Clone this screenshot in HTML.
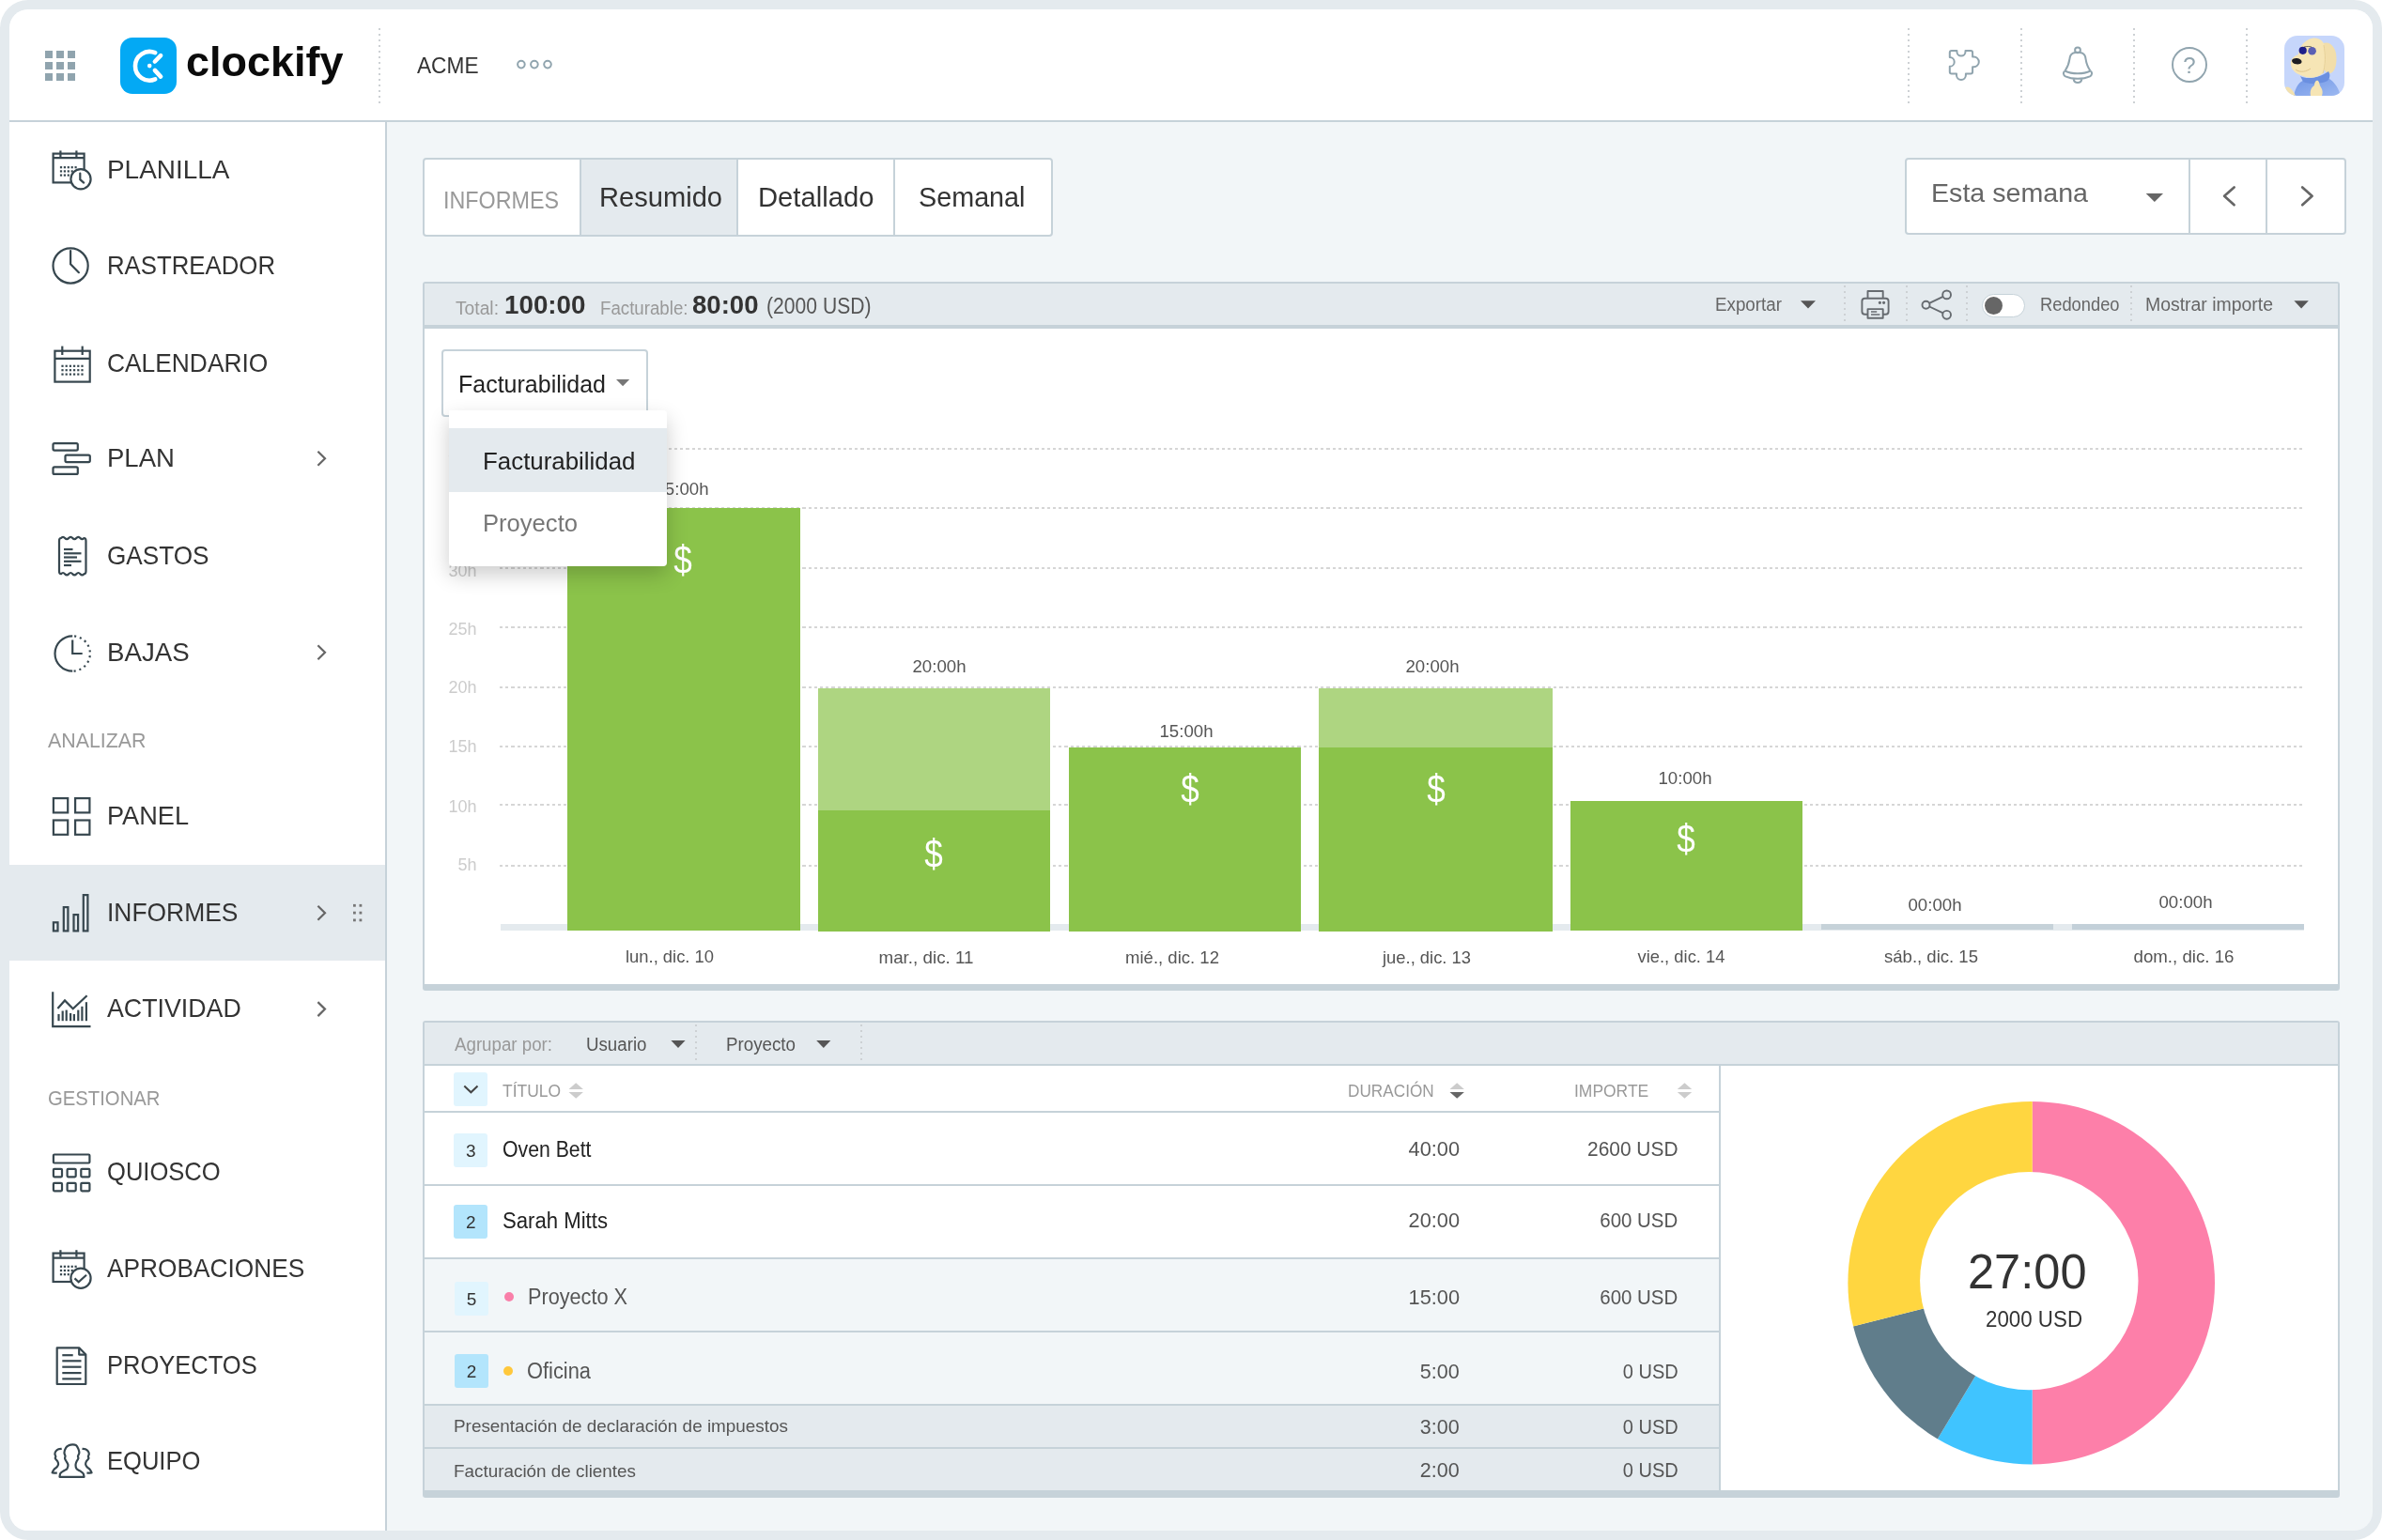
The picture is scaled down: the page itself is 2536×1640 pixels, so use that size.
<!DOCTYPE html>
<html lang="es">
<head>
<meta charset="utf-8">
<title>Clockify – Informes</title>
<style>
*{box-sizing:border-box;margin:0;padding:0}
html,body{width:2536px;height:1640px;background:#fff;overflow:hidden}
body{font-family:"Liberation Sans",Arial,sans-serif;position:relative}
.a{position:absolute}
.t{position:absolute;white-space:nowrap;line-height:1;z-index:2}
.tl{position:absolute;left:0;top:0;width:2536px;height:1640px;will-change:transform}
#frame{left:0;top:0;width:2536px;height:1640px;border-radius:30px;background:#e4eaee}
#app{left:10px;top:10px;width:2516px;height:1620px;border-radius:20px;background:#f2f6f8;overflow:hidden}
#header{left:0;top:0;width:2516px;height:120px;background:#fff;border-bottom:2px solid #c6d2d9}
#sidebar{left:0;top:120px;width:402px;height:1500px;background:#fff;border-right:2px solid #c6d2d9}
#active{left:0;top:911px;width:400px;height:102px;background:#e4eaee}
.vd{width:2px;background:repeating-linear-gradient(to bottom,#cdd1d4 0 2px,transparent 2px 6px)}
.hd{height:2px;background:repeating-linear-gradient(to right,#d6d6d6 0 3.2px,transparent 3.2px 6.2px)}
.box{background:#fff;border:2px solid #c6d2d9}
.bar{background:#8bc34a}
.barl{background:#aed581}
svg{position:absolute;left:0;top:0;overflow:visible}
</style>
</head>
<body>
<div id="frame" class="a"></div>
<div id="app" class="a">
  <div id="header" class="a"></div>
  <div id="sidebar" class="a"></div>
  <div id="active" class="a"></div>
</div>

<!-- header dividers -->
<div class="a vd" style="left:403px;top:30px;height:80px"></div>
<div class="a vd" style="left:2031px;top:30px;height:80px"></div>
<div class="a vd" style="left:2151px;top:30px;height:80px"></div>
<div class="a vd" style="left:2271px;top:30px;height:80px"></div>
<div class="a vd" style="left:2391px;top:30px;height:80px"></div>

<!-- tabs -->
<div class="a box" style="left:450px;top:168px;width:671px;height:84px;border-radius:4px"></div>
<div class="a" style="left:619px;top:170px;width:166px;height:80px;background:#e4eaee"></div>
<div class="a" style="left:617px;top:170px;width:2px;height:80px;background:#c6d2d9"></div>
<div class="a" style="left:784px;top:170px;width:2px;height:80px;background:#c6d2d9"></div>
<div class="a" style="left:951px;top:170px;width:2px;height:80px;background:#c6d2d9"></div>

<!-- date picker -->
<div class="a box" style="left:2028px;top:168px;width:470px;height:82px;border-radius:4px"></div>
<div class="a" style="left:2330px;top:170px;width:2px;height:80px;background:#c6d2d9"></div>
<div class="a" style="left:2412px;top:170px;width:2px;height:80px;background:#c6d2d9"></div>

<!-- chart panel -->
<div class="a" style="left:450px;top:300px;width:2041px;height:755px;background:#c6d2d9;border-radius:3px"></div>
<div class="a" style="left:452px;top:301.700px;width:2037px;height:44.400px;background:#e4eaee"></div>
<div class="a" style="left:452px;top:349.600px;width:2037px;height:698.400px;background:#fff"></div>
<div class="a vd" style="left:1963px;top:304px;height:42px"></div>
<div class="a vd" style="left:2029px;top:304px;height:42px"></div>
<div class="a vd" style="left:2093px;top:304px;height:42px"></div>
<div class="a vd" style="left:2268px;top:304px;height:42px"></div>
<!-- toggle -->
<div class="a" style="left:2110px;top:313px;width:46px;height:25px;border-radius:13px;background:#fff;border:1.5px solid #c6d2d9"></div>
<div class="a" style="left:2113px;top:316px;width:19px;height:19px;border-radius:50%;background:#666"></div>

<!-- chart dropdown -->
<div class="a box" style="left:470px;top:372px;width:220px;height:72px;border-radius:4px"></div>

<!-- grid lines -->
<div class="a hd" style="left:532px;top:477px;width:1921px"></div>
<div class="a hd" style="left:532px;top:540.4px;width:1921px"></div>
<div class="a hd" style="left:532px;top:604.1px;width:1921px"></div>
<div class="a hd" style="left:532px;top:667.1px;width:1921px"></div>
<div class="a hd" style="left:532px;top:730.5px;width:1921px"></div>
<div class="a hd" style="left:532px;top:794.1px;width:1921px"></div>
<div class="a hd" style="left:532px;top:856px;width:1921px"></div>
<div class="a hd" style="left:532px;top:921.3px;width:1921px"></div>
<!-- baseline -->
<div class="a" style="left:533px;top:984px;width:1920px;height:7px;background:#e4eaee"></div>
<div class="a" style="left:1939px;top:984px;width:247px;height:6px;background:#c6d2d9"></div>
<div class="a" style="left:2206px;top:984px;width:247px;height:6px;background:#c3d0d9"></div>
<!-- bars -->
<div class="a bar" style="left:604px;top:541px;width:248px;height:450px"></div>
<div class="a barl" style="left:871px;top:733px;width:247px;height:131px"></div>
<div class="a bar" style="left:871px;top:863px;width:247px;height:129px"></div>
<div class="a bar" style="left:1138px;top:796px;width:247px;height:196px"></div>
<div class="a barl" style="left:1404px;top:733px;width:249px;height:64px"></div>
<div class="a bar" style="left:1404px;top:796px;width:249px;height:196px"></div>
<div class="a bar" style="left:1672px;top:853px;width:247px;height:138px"></div>

<!-- dropdown menu -->
<div class="a" style="left:478px;top:437px;width:232px;height:166px;background:#fff;border-radius:0 4px 4px 4px;box-shadow:0 9px 22px rgba(0,0,0,.2);z-index:5"></div>
<div class="a" style="left:478px;top:456px;width:232px;height:68px;background:#e4eaee;z-index:5"></div>

<!-- table panel -->
<div class="a" style="left:450px;top:1087px;width:2041px;height:508px;background:#c6d2d9;border-radius:3px"></div>
<div class="a" style="left:452px;top:1089px;width:2037px;height:44px;background:#e4eaee"></div>
<div class="a vd" style="left:740px;top:1091px;height:41px"></div>
<div class="a vd" style="left:916px;top:1091px;height:41px"></div>
<!-- table rows -->
<div class="a" style="left:452px;top:1134.75px;width:1378.3px;height:48.5px;background:#fff"></div>
<div class="a" style="left:452px;top:1184.75px;width:1378.3px;height:76.5px;background:#fff"></div>
<div class="a" style="left:452px;top:1262.75px;width:1378.3px;height:76.5px;background:#fff"></div>
<div class="a" style="left:452px;top:1340.75px;width:1378.3px;height:76.5px;background:#f2f6f8"></div>
<div class="a" style="left:452px;top:1418.75px;width:1378.3px;height:76.5px;background:#f2f6f8"></div>
<div class="a" style="left:452px;top:1496.75px;width:1378.3px;height:44.5px;background:#e4eaee"></div>
<div class="a" style="left:452px;top:1542.75px;width:1378.3px;height:44.5px;background:#e4eaee"></div>
<!-- donut panel -->
<div class="a" style="left:1831.8px;top:1134.75px;width:657.2px;height:452.25px;background:#fff"></div>
<!-- badges -->
<div class="a" style="left:483px;top:1142px;width:36px;height:36px;border-radius:3px;background:#e1f5fe"></div>
<div class="a" style="left:483px;top:1207px;width:36px;height:36px;border-radius:3px;background:#e1f5fe"></div>
<div class="a" style="left:483px;top:1283px;width:36px;height:36px;border-radius:3px;background:#b3e5fc"></div>
<div class="a" style="left:484px;top:1365px;width:36px;height:36px;border-radius:3px;background:#e1f5fe"></div>
<div class="a" style="left:484px;top:1442px;width:36px;height:36px;border-radius:3px;background:#b3e5fc"></div>
<div class="a" style="left:537px;top:1376px;width:10px;height:10px;border-radius:50%;background:#f97fa9"></div>
<div class="a" style="left:536px;top:1455px;width:10px;height:10px;border-radius:50%;background:#ffc83c"></div>

<svg width="2536" height="1640" viewBox="0 0 2536 1640" style="z-index:3">
<rect x="48" y="54" width="8" height="8" fill="#90a4ae"/>
<rect x="60" y="54" width="8" height="8" fill="#90a4ae"/>
<rect x="72" y="54" width="8" height="8" fill="#90a4ae"/>
<rect x="48" y="66" width="8" height="8" fill="#90a4ae"/>
<rect x="60" y="66" width="8" height="8" fill="#90a4ae"/>
<rect x="72" y="66" width="8" height="8" fill="#90a4ae"/>
<rect x="48" y="78" width="8" height="8" fill="#90a4ae"/>
<rect x="60" y="78" width="8" height="8" fill="#90a4ae"/>
<rect x="72" y="78" width="8" height="8" fill="#90a4ae"/>
<rect x="128" y="40" width="60" height="60" rx="13" fill="#03a9f4"/>
<g fill="none" stroke="#fff" stroke-width="4.6" stroke-linecap="round"><path d="M165.2 56.2A15.3 15.3 0 1 0 165.2 84.4"/><path d="M164.9 65.5L171.1 59.2M164.9 74.9L171.1 81.6"/></g><circle cx="159.2" cy="70.1" r="2.3" fill="#fff"/>
<circle cx="554.9" cy="68.6" r="3.8" fill="none" stroke="#90a4ae" stroke-width="2"/>
<circle cx="568.9" cy="68.6" r="3.8" fill="none" stroke="#90a4ae" stroke-width="2"/>
<circle cx="583.0" cy="68.6" r="3.8" fill="none" stroke="#90a4ae" stroke-width="2"/>
<path fill="none" stroke="#90a4ae" stroke-width="2" stroke-linejoin="round" d="M2077.8 53.9 H2083.4 V55 A4.55 4.55 0 0 0 2092.5 55 V53.9 H2098.1 Q2100.1 53.9 2100.1 55.9 V60.6 H2101.5 A5.3 5.3 0 0 1 2101.5 71.2 H2100.1 V76.5 Q2100.1 78.5 2098.1 78.5 H2092.9 V80 A4.95 4.95 0 0 1 2083 80 V78.5 H2077.8 Q2075.8 78.5 2075.8 76.5 V70.8 A4.9 4.9 0 0 0 2075.8 61 V55.9 Q2075.8 53.9 2077.8 53.9Z"/>
<g fill="none" stroke="#90a4ae" stroke-width="2" stroke-linejoin="round"><circle cx="2212" cy="53.3" r="2.9"/><path d="M2198.5 75.5 C2204 68 2203 62 2204.2 59.5 C2205.5 56.6 2208.5 55.8 2212 55.8 C2215.500 55.8 2218.5 56.6 2219.8 59.5 C2221 62 2220 68 2225.5 75.5"/><path d="M2198.5 75.5 C2196 77 2196.5 80 2199 81.300 C2206 84.600 2218 84.600 2225 81.300 C2227.500 80 2228 77 2225.5 75.5"/><path d="M2198.5 75.5 C2206 79.300 2218 79.300 2225.5 75.5"/><path d="M2207.6 84.2 A4.5 4.8 0 0 0 2216.4 84.2"/></g>
<circle cx="2331" cy="69" r="18" fill="none" stroke="#90a4ae" stroke-width="1.9"/>
<defs><clipPath id="av"><rect x="0" y="0" width="64" height="64" rx="14"/></clipPath><linearGradient id="hood" x1="0" y1="0" x2="1" y2="1"><stop offset="0" stop-color="#6f95e6"/><stop offset="1" stop-color="#9db9f1"/></linearGradient></defs>
<g clip-path="url(#av)" transform="translate(2432 38)"><rect x="0" y="0" width="64" height="64" fill="#c6d6fb"/><path d="M41 8 C50 5 56 14 55.500 26 C55 35 52 41 47 40 C42 39 40 30 40 22 Z" fill="#f2deaa"/><path d="M10 64 C12 54 16 49 22 47 L44 44 C52 47 57 54 60 64 Z" fill="url(#hood)"/><path d="M0 56 C4 52 8 56 12 64 L0 64 Z" fill="#f3e1ae"/><path d="M17 43 C24 47 38 45 47 38 C49 41 49 45 46 48 C38 52 26 52 20 49 Z" fill="#6a8fe0"/><path d="M26 4 C34 0 42 4 43 12 C45 22 45 34 41 40 C36 45 26 46 20 43 C14 41 8 38 7 31 C6 25 10 22 15 20 C16 12 20 7 26 4 Z" fill="#f6e5b5"/><path d="M42 10 C44 20 44 32 41 40" stroke="#e5cf96" stroke-width="1" fill="none"/><path d="M12 36 C17 40 24 38 28 35" stroke="#e0c58c" stroke-width="1" fill="none"/><ellipse cx="13.300" cy="27.200" rx="5.300" ry="3.200" transform="rotate(8 13.300 27.200)" fill="#1c1c22"/><circle cx="19.700" cy="15.800" r="4.100" fill="#1f1f8a"/><circle cx="29.600" cy="16.200" r="4.300" fill="#5a5fb4"/><path d="M21 12 C24 11.300 27 11.300 29 12" stroke="#333" stroke-width="0.700" fill="none"/><path d="M28 64 C27 58 29 55 32 53 C32 49 34 47 36 48 C38 50 37 53 39 55 C41 58 41 61 40 64 Z" fill="#f6e5b5"/></g>
<path d="M2284.700 205.900H2303L2293.850 215.100Z" fill="#666"/>
<path d="M2378.600 199.400L2368.100 208.800L2378.600 218.200M2451.200 199.400L2461.600 208.800L2451.200 218.200" fill="none" stroke="#666" stroke-width="2.700" stroke-linecap="round" stroke-linejoin="round"/>
<g fill="none" stroke="#37474f" stroke-width="2.200">
<rect x="56.6" y="163.6" width="32.99999999999999" height="30.80000000000001"/>
<path d="M56.6 168.2H89.6"/>
<path d="M64.4 160.4V167.4"/>
<path d="M81.4 160.4V167.4"/>
<rect x="63.90" y="177.10" width="2.2" height="2.2" fill="#37474f" stroke="none"/>
<rect x="63.90" y="181.30" width="2.2" height="2.2" fill="#37474f" stroke="none"/>
<rect x="63.90" y="185.50" width="2.2" height="2.2" fill="#37474f" stroke="none"/>
<rect x="67.80" y="177.10" width="2.2" height="2.2" fill="#37474f" stroke="none"/>
<rect x="67.80" y="181.30" width="2.2" height="2.2" fill="#37474f" stroke="none"/>
<rect x="67.80" y="185.50" width="2.2" height="2.2" fill="#37474f" stroke="none"/>
<rect x="71.70" y="177.10" width="2.2" height="2.2" fill="#37474f" stroke="none"/>
<rect x="71.70" y="181.30" width="2.2" height="2.2" fill="#37474f" stroke="none"/>
<rect x="71.70" y="185.50" width="2.2" height="2.2" fill="#37474f" stroke="none"/>
<rect x="75.60" y="177.10" width="2.2" height="2.2" fill="#37474f" stroke="none"/>
<rect x="75.60" y="181.30" width="2.2" height="2.2" fill="#37474f" stroke="none"/>
<rect x="75.60" y="185.50" width="2.2" height="2.2" fill="#37474f" stroke="none"/>
<rect x="79.50" y="177.10" width="2.2" height="2.2" fill="#37474f" stroke="none"/>
<rect x="79.50" y="181.30" width="2.2" height="2.2" fill="#37474f" stroke="none"/>
<rect x="79.50" y="185.50" width="2.2" height="2.2" fill="#37474f" stroke="none"/>
<circle cx="86" cy="190.700" r="10.600" fill="#fff"/>
<path d="M85.300 184.500V191.200L89.200 194.600" stroke-linecap="round"/>
<circle cx="75.100" cy="283" r="18.600"/>
<path d="M75.100 267V281.200L83.900 290.200" stroke-linecap="round"/>
<rect x="58.4" y="373.7" width="37.300000000000004" height="32.900000000000034"/>
<path d="M58.4 381.8H95.7"/>
<path d="M66.3 368.6V378"/>
<path d="M87.7 368.6V378"/>
<rect x="65.40" y="388.70" width="2.2" height="2.2" fill="#37474f" stroke="none"/>
<rect x="65.40" y="393.10" width="2.2" height="2.2" fill="#37474f" stroke="none"/>
<rect x="65.40" y="397.50" width="2.2" height="2.2" fill="#37474f" stroke="none"/>
<rect x="69.60" y="388.70" width="2.2" height="2.2" fill="#37474f" stroke="none"/>
<rect x="69.60" y="393.10" width="2.2" height="2.2" fill="#37474f" stroke="none"/>
<rect x="69.60" y="397.50" width="2.2" height="2.2" fill="#37474f" stroke="none"/>
<rect x="73.80" y="388.70" width="2.2" height="2.2" fill="#37474f" stroke="none"/>
<rect x="73.80" y="393.10" width="2.2" height="2.2" fill="#37474f" stroke="none"/>
<rect x="73.80" y="397.50" width="2.2" height="2.2" fill="#37474f" stroke="none"/>
<rect x="78.00" y="388.70" width="2.2" height="2.2" fill="#37474f" stroke="none"/>
<rect x="78.00" y="393.10" width="2.2" height="2.2" fill="#37474f" stroke="none"/>
<rect x="78.00" y="397.50" width="2.2" height="2.2" fill="#37474f" stroke="none"/>
<rect x="82.20" y="388.70" width="2.2" height="2.2" fill="#37474f" stroke="none"/>
<rect x="82.20" y="393.10" width="2.2" height="2.2" fill="#37474f" stroke="none"/>
<rect x="82.20" y="397.50" width="2.2" height="2.2" fill="#37474f" stroke="none"/>
<rect x="86.40" y="388.70" width="2.2" height="2.2" fill="#37474f" stroke="none"/>
<rect x="86.40" y="393.10" width="2.2" height="2.2" fill="#37474f" stroke="none"/>
<rect x="86.40" y="397.50" width="2.2" height="2.2" fill="#37474f" stroke="none"/>
<rect x="56.500" y="472.100" width="26.300" height="7.500" rx="1.500"/>
<rect x="69.500" y="484.600" width="26.300" height="7.500" rx="1.500"/>
<rect x="56.500" y="497.400" width="26.300" height="7.500" rx="1.500"/>
<path d="M63 576 Q63 573 65 573 Q67.04 570.60 69.08 573.00Q71.12 575.40 73.17 573.00Q75.21 570.60 77.25 573.00Q79.29 575.40 81.33 573.00Q83.37 570.60 85.42 573.00Q87.46 575.40 89.50 573.00 Q91.500 573 91.500 576 V608.200 Q91.500 611.2 89.500 611.2 Q87.46 613.60 85.42 611.20Q83.38 608.80 81.33 611.20Q79.29 613.60 77.25 611.20Q75.21 608.80 73.17 611.20Q71.13 613.60 69.08 611.20Q67.04 608.80 65.00 611.20 Q63 611.2 63 608.200 Z" stroke-linejoin="round"/>
<path d="M68 585H77.5"/>
<path d="M68 589.3H86.5"/>
<path d="M68 593.5H82"/>
<path d="M68 597.8H86.5"/>
<path d="M68 602H76"/>
<path d="M77.200 677.300A18.700 18.700 0 0 0 77.200 714.700"/>
<path d="M77.200 677.300A18.700 18.700 0 0 1 77.200 714.700" stroke-dasharray="2.100 3.770" stroke-dashoffset="-2"/>
<path d="M77.200 681.500V696H87.700"/>
<rect x="56.9" y="850.1" width="15.300" height="15.300"/>
<rect x="56.9" y="873.5" width="15.300" height="15.300"/>
<rect x="80.1" y="850.1" width="15.300" height="15.300"/>
<rect x="80.1" y="873.5" width="15.300" height="15.300"/>
<rect x="56.9" y="982.3" width="4.600" height="9.1"/>
<rect x="67.8" y="966.1" width="4.600" height="25.3"/>
<rect x="78.5" y="974.1" width="4.600" height="17.3"/>
<rect x="88.8" y="953.1" width="4.600" height="38.3"/>
<path d="M56.200 1056.300V1093.200H96.500"/>
<path d="M61.400 1073.900L69 1065.400L77.700 1074.200L92.600 1060.200"/>
<path d="M62.5 1080V1087.200"/>
<path d="M66.7 1076.5V1087.200"/>
<path d="M70.7 1075.6V1087.200"/>
<path d="M75.1 1079V1087.200"/>
<path d="M78.9 1080V1087.200"/>
<path d="M83.3 1075.6V1087.200"/>
<path d="M87.4 1071.8V1087.200"/>
<path d="M91.9 1067.2V1087.200"/>
<rect x="56.900" y="1229.500" width="38.500" height="9" rx="1"/>
<rect x="56.9" y="1244.8" width="9.100" height="8.500" rx="1"/>
<rect x="56.9" y="1259.8" width="9.100" height="8.500" rx="1"/>
<rect x="71.6" y="1244.8" width="9.100" height="8.500" rx="1"/>
<rect x="71.6" y="1259.8" width="9.100" height="8.500" rx="1"/>
<rect x="86.3" y="1244.8" width="9.100" height="8.500" rx="1"/>
<rect x="86.3" y="1259.8" width="9.100" height="8.500" rx="1"/>
<rect x="56.6" y="1334.6" width="32.99999999999999" height="30.40000000000009"/>
<path d="M56.6 1339.6H89.6"/>
<path d="M64.4 1331.2V1338.6"/>
<path d="M81.4 1331.2V1338.6"/>
<rect x="63.90" y="1347.70" width="2.2" height="2.2" fill="#37474f" stroke="none"/>
<rect x="63.90" y="1351.90" width="2.2" height="2.2" fill="#37474f" stroke="none"/>
<rect x="63.90" y="1356.10" width="2.2" height="2.2" fill="#37474f" stroke="none"/>
<rect x="67.80" y="1347.70" width="2.2" height="2.2" fill="#37474f" stroke="none"/>
<rect x="67.80" y="1351.90" width="2.2" height="2.2" fill="#37474f" stroke="none"/>
<rect x="67.80" y="1356.10" width="2.2" height="2.2" fill="#37474f" stroke="none"/>
<rect x="71.70" y="1347.70" width="2.2" height="2.2" fill="#37474f" stroke="none"/>
<rect x="71.70" y="1351.90" width="2.2" height="2.2" fill="#37474f" stroke="none"/>
<rect x="71.70" y="1356.10" width="2.2" height="2.2" fill="#37474f" stroke="none"/>
<rect x="75.60" y="1347.70" width="2.2" height="2.2" fill="#37474f" stroke="none"/>
<rect x="75.60" y="1351.90" width="2.2" height="2.2" fill="#37474f" stroke="none"/>
<rect x="75.60" y="1356.10" width="2.2" height="2.2" fill="#37474f" stroke="none"/>
<rect x="79.50" y="1347.70" width="2.2" height="2.2" fill="#37474f" stroke="none"/>
<rect x="79.50" y="1351.90" width="2.2" height="2.2" fill="#37474f" stroke="none"/>
<rect x="79.50" y="1356.10" width="2.2" height="2.2" fill="#37474f" stroke="none"/>
<circle cx="86" cy="1361.200" r="10.600" fill="#fff"/>
<path d="M79.500 1361.400L83.700 1365.200L92 1357.800"/>
<path d="M60.700 1435.300H84.200L91.300 1442.600V1474H60.700Z" stroke-linejoin="round"/>
<path d="M84.200 1435.300V1442.600H91.300" stroke-linejoin="round"/>
<path d="M66.300 1443.2H77.7"/>
<path d="M66.300 1449.3H86.5"/>
<path d="M66.300 1455.7H86.5"/>
<path d="M66.300 1462.1H86.5"/>
<path d="M66.300 1468.4H86.5"/>
<path d="M63.47 1572.86C63.62 1572.18 63.64 1569.91 64.40 1568.81C65.16 1567.70 66.87 1566.99 68.04 1566.21C69.21 1565.43 70.68 1565.17 71.41 1564.13C72.15 1563.09 72.58 1561.28 72.45 1559.98C72.32 1558.68 71.20 1557.47 70.63 1556.34C70.07 1555.22 69.27 1554.18 69.08 1553.23C68.89 1552.28 69.60 1551.67 69.49 1550.63C69.39 1549.60 68.35 1548.47 68.45 1547.00C68.56 1545.53 69.32 1543.10 70.11 1541.81C70.91 1540.51 72.02 1539.80 73.23 1539.21C74.44 1538.62 76.09 1538.29 77.38 1538.28C78.68 1538.26 80.02 1538.35 81.02 1539.11C82.01 1539.87 82.79 1541.53 83.35 1542.85C83.92 1544.16 84.45 1545.70 84.39 1547.00C84.33 1548.30 83.16 1549.60 82.99 1550.63C82.82 1551.67 83.60 1552.28 83.35 1553.23C83.11 1554.18 82.01 1555.22 81.54 1556.34C81.06 1557.47 80.50 1558.68 80.50 1559.98C80.50 1561.28 80.76 1563.05 81.54 1564.13C82.32 1565.21 84.00 1565.65 85.17 1566.47C86.34 1567.29 87.81 1568.00 88.55 1569.07C89.28 1570.13 89.41 1572.22 89.58 1572.86Z" stroke-linejoin="round"/>
<path d="M65.70 1542.85C65.14 1542.91 63.36 1542.83 62.33 1543.26C61.29 1543.69 60.12 1544.60 59.47 1545.44C58.82 1546.28 58.46 1547.35 58.43 1548.30C58.41 1549.25 59.25 1550.33 59.31 1551.15C59.38 1551.97 58.47 1552.36 58.80 1553.23C59.12 1554.09 60.74 1555.31 61.29 1556.34C61.83 1557.38 62.15 1558.51 62.07 1559.46C61.98 1560.41 61.50 1561.19 60.77 1562.06C60.03 1562.92 58.45 1563.74 57.65 1564.65C56.86 1565.56 56.25 1566.86 55.99 1567.51C55.73 1568.16 55.30 1568.37 56.10 1568.55C56.89 1568.72 59.99 1568.55 60.77 1568.55" stroke-linecap="butt"/>
<path d="M87.51 1542.85C88.07 1542.91 89.84 1542.83 90.88 1543.26C91.92 1543.69 93.09 1544.60 93.74 1545.44C94.39 1546.28 94.75 1547.35 94.78 1548.30C94.80 1549.25 93.95 1550.33 93.89 1551.15C93.83 1551.97 94.74 1552.36 94.41 1553.23C94.08 1554.09 92.47 1555.31 91.92 1556.34C91.38 1557.38 91.06 1558.51 91.14 1559.46C91.23 1560.41 91.70 1561.19 92.44 1562.06C93.18 1562.92 94.76 1563.74 95.56 1564.65C96.35 1565.56 96.96 1566.86 97.22 1567.51C97.48 1568.16 97.91 1568.37 97.11 1568.55C96.32 1568.72 93.22 1568.55 92.44 1568.55"/>
</g>
<path d="M338.400 480.8L346 488.3L338.400 495.8" fill="none" stroke="#666" stroke-width="2.200"/>
<path d="M338.400 687.2L346 694.7L338.400 702.2" fill="none" stroke="#666" stroke-width="2.200"/>
<path d="M338.400 964.8L346 972.3L338.400 979.8" fill="none" stroke="#666" stroke-width="2.200"/>
<path d="M338.400 1067.1L346 1074.6L338.400 1082.1" fill="none" stroke="#666" stroke-width="2.200"/>
<rect x="376.0" y="962.9" width="2.800" height="2.800" fill="#777"/>
<rect x="376.0" y="970.7" width="2.800" height="2.800" fill="#777"/>
<rect x="376.0" y="978.5" width="2.800" height="2.800" fill="#777"/>
<rect x="382.5" y="962.9" width="2.800" height="2.800" fill="#777"/>
<rect x="382.5" y="970.7" width="2.800" height="2.800" fill="#777"/>
<rect x="382.5" y="978.5" width="2.800" height="2.800" fill="#777"/>
<path d="M1917 320.3H1933L1925.0 328.5Z" fill="#555"/>
<path d="M2442.4 320.3H2457.8L2450.1000000000004 328.5Z" fill="#555"/>
<g fill="none" stroke="#666b70" stroke-width="1.900" stroke-linejoin="round"><path d="M1988.500 317.500V310H2004.700V317.500"/><path d="M1988.500 334.800H1985.500Q1982.400 334.800 1982.400 331.700V320.800Q1982.400 317.700 1985.500 317.700H2007.500Q2010.600 317.700 2010.600 320.800V331.700Q2010.600 334.800 2007.500 334.800H2004.700"/><rect x="1988.500" y="329.100" width="16.200" height="9.600"/><path d="M1992 331.900H1998.200M1992 335.100H2001.400" stroke-width="1.500"/><circle cx="2001.400" cy="322.300" r="0.700" fill="#666b70"/><circle cx="2005.600" cy="322.300" r="0.700" fill="#666b70"/></g>
<g fill="none" stroke="#666b70" stroke-width="1.900"><circle cx="2072.600" cy="313.900" r="4.400"/><circle cx="2050.500" cy="324.700" r="4"/><circle cx="2072.600" cy="335.300" r="4.400"/><path d="M2054.100 322.900L2068.700 315.900M2054.100 326.500L2068.700 333.400"/></g>
<path d="M656 404H670.2L663.1 411.2Z" fill="#777"/>
<path d="M714.4 1108H729.6L722.0 1116.1Z" fill="#555"/>
<path d="M869.2 1108H884.4L876.8 1116.1Z" fill="#555"/>
<path d="M494.300 1156.500L501.400 1163.300L508.500 1156.500" fill="none" stroke="#444" stroke-width="2" />
<path d="M605.5 1160L613.2 1153.200L620.9000000000001 1160Z" fill="#ccc"/>
<path d="M605.5 1163L613.2 1169.800L620.9000000000001 1163Z" fill="#ccc"/>
<path d="M1543.5 1160L1551.2 1153.200L1558.9 1160Z" fill="#ccc"/>
<path d="M1543.5 1163L1551.2 1169.800L1558.9 1163Z" fill="#666"/>
<path d="M1785.8 1160L1793.5 1153.200L1801.2 1160Z" fill="#ccc"/>
<path d="M1785.8 1163L1793.5 1169.800L1801.2 1163Z" fill="#ccc"/>
<defs><clipPath id="dn"><ellipse cx="2162.700" cy="1366.200" rx="195.300" ry="193.300"/></clipPath></defs>
<g clip-path="url(#dn)">
<path d="M2163.7 1364.5L2163.70 1104.50L2230.99 1113.36L2293.70 1139.33L2347.55 1180.65L2388.87 1234.50L2414.84 1297.21L2423.70 1364.50L2414.84 1431.79L2388.87 1494.50L2347.55 1548.35L2293.70 1589.67L2230.99 1615.64L2163.70 1624.50Z" fill="#fd7fa9"/>
<path d="M2163.7 1364.5L2163.70 1624.50L2151.98 1624.24L2140.29 1623.44L2128.64 1622.13L2117.06 1620.28L2105.58 1617.92L2094.22 1615.04L2083.00 1611.66L2071.94 1607.77L2061.07 1603.39L2050.40 1598.52L2039.97 1593.17L2029.79 1587.36Z" fill="#40c4ff"/>
<path d="M2163.7 1364.5L2029.79 1587.36L2015.53 1578.15L2001.91 1568.03L1988.97 1557.03L1976.78 1545.22L1965.38 1532.64L1954.83 1519.34L1945.17 1505.38L1936.45 1490.82L1928.69 1475.72L1921.93 1460.14L1916.20 1444.16L1911.53 1427.84Z" fill="#607d8b"/>
<path d="M2163.7 1364.5L1911.53 1427.84L1904.86 1389.08L1904.12 1349.76L1909.31 1310.78L1920.32 1273.02L1936.91 1237.36L1958.68 1204.61L1985.14 1175.51L2015.69 1150.74L2049.62 1130.86L2086.17 1116.33L2124.48 1107.47L2163.70 1104.50Z" fill="#ffd640"/>
</g>
<circle cx="2160.300" cy="1364.100" r="116.200" fill="#fff"/>
</svg>
<div class="tl" style="z-index:4">
<span class="t" style="top:44.0px;font-size:44px;color:#0b0b0b;font-weight:700;left:197.5px;transform:scaleX(1.0221);transform-origin:0 50%;">clockify</span>
<span class="t" style="top:57.8px;font-size:24px;color:#333;left:444.0px;transform:scaleX(0.9446);transform-origin:0 50%;">ACME</span>
<span class="t" style="top:166.5px;font-size:28px;color:#333;left:114.0px;transform:scaleX(0.9966);transform-origin:0 50%;">PLANILLA</span>
<span class="t" style="top:269.3px;font-size:28px;color:#333;left:114.0px;transform:scaleX(0.9205);transform-origin:0 50%;">RASTREADOR</span>
<span class="t" style="top:372.8px;font-size:28px;color:#333;left:114.0px;transform:scaleX(0.9410);transform-origin:0 50%;">CALENDARIO</span>
<span class="t" style="top:474.3px;font-size:28px;color:#333;left:114.0px;transform:scaleX(0.9828);transform-origin:0 50%;">PLAN</span>
<span class="t" style="top:577.8px;font-size:28px;color:#333;left:114.0px;transform:scaleX(0.9338);transform-origin:0 50%;">GASTOS</span>
<span class="t" style="top:680.7px;font-size:28px;color:#333;left:114.0px;transform:scaleX(0.9887);transform-origin:0 50%;">BAJAS</span>
<span class="t" style="top:854.7px;font-size:28px;color:#333;left:114.0px;transform:scaleX(0.9694);transform-origin:0 50%;">PANEL</span>
<span class="t" style="top:958.3px;font-size:28px;color:#333;left:114.0px;transform:scaleX(0.9433);transform-origin:0 50%;">INFORMES</span>
<span class="t" style="top:1060.3px;font-size:28px;color:#333;left:114.0px;transform:scaleX(0.9561);transform-origin:0 50%;">ACTIVIDAD</span>
<span class="t" style="top:1234.3px;font-size:28px;color:#333;left:114.0px;transform:scaleX(0.9128);transform-origin:0 50%;">QUIOSCO</span>
<span class="t" style="top:1337.3px;font-size:28px;color:#333;left:114.0px;transform:scaleX(0.9386);transform-origin:0 50%;">APROBACIONES</span>
<span class="t" style="top:1440.3px;font-size:28px;color:#333;left:114.0px;transform:scaleX(0.9109);transform-origin:0 50%;">PROYECTOS</span>
<span class="t" style="top:1542.3px;font-size:28px;color:#333;left:114.0px;transform:scaleX(0.9126);transform-origin:0 50%;">EQUIPO</span>
<span class="t" style="top:779.2px;font-size:21.5px;color:#999;left:51.0px;transform:scaleX(0.9939);transform-origin:0 50%;">ANALIZAR</span>
<span class="t" style="top:1159.5px;font-size:21.5px;color:#999;left:51.0px;transform:scaleX(0.9436);transform-origin:0 50%;">GESTIONAR</span>
<span class="t" style="top:200.3px;font-size:26px;color:#999;left:472.0px;transform:scaleX(0.8963);transform-origin:0 50%;">INFORMES</span>
<span class="t" style="top:195.0px;font-size:30px;color:#333;left:638.0px;transform:scaleX(0.9699);transform-origin:0 50%;">Resumido</span>
<span class="t" style="top:195.0px;font-size:30px;color:#333;left:806.5px;transform:scaleX(0.9742);transform-origin:0 50%;">Detallado</span>
<span class="t" style="top:195.0px;font-size:30px;color:#333;left:978.0px;transform:scaleX(0.9586);transform-origin:0 50%;">Semanal</span>
<span class="t" style="top:192.3px;font-size:28px;color:#666;left:2056.0px;transform:scaleX(1.0219);transform-origin:0 50%;">Esta semana</span>
<span class="t" style="top:317.9px;font-size:20px;color:#999;left:485.0px;transform:scaleX(0.9621);transform-origin:0 50%;">Total:</span>
<span class="t" style="top:311.1px;font-size:28px;color:#333;font-weight:700;left:537.0px;transform:scaleX(0.9921);transform-origin:0 50%;">100:00</span>
<span class="t" style="top:317.9px;font-size:20px;color:#999;left:638.5px;transform:scaleX(0.9344);transform-origin:0 50%;">Facturable:</span>
<span class="t" style="top:311.1px;font-size:28px;color:#333;font-weight:700;left:737.0px;transform:scaleX(0.9843);transform-origin:0 50%;">80:00</span>
<span class="t" style="top:315.3px;font-size:23px;color:#555;left:815.5px;transform:scaleX(0.9182);transform-origin:0 50%;">(2000 USD)</span>
<span class="t" style="top:313.7px;font-size:20px;color:#666;left:1826.0px;transform:scaleX(0.9392);transform-origin:0 50%;">Exportar</span>
<span class="t" style="top:313.7px;font-size:20px;color:#666;left:2172.0px;transform:scaleX(0.9154);transform-origin:0 50%;">Redondeo</span>
<span class="t" style="top:313.7px;font-size:20px;color:#666;left:2284.0px;transform:scaleX(0.9712);transform-origin:0 50%;">Mostrar importe</span>
<span class="t" style="top:396.0px;font-size:26px;color:#222;left:487.5px;transform:scaleX(0.9613);transform-origin:0 50%;">Facturabilidad</span>
<span class="t" style="top:473.5px;font-size:18px;color:#ccc;right:2028.5px;">40h</span>
<span class="t" style="top:536.1px;font-size:18px;color:#ccc;right:2028.5px;">35h</span>
<span class="t" style="top:598.7px;font-size:18px;color:#ccc;right:2028.5px;">30h</span>
<span class="t" style="top:661.3px;font-size:18px;color:#ccc;right:2028.5px;">25h</span>
<span class="t" style="top:723.1px;font-size:18px;color:#ccc;right:2028.5px;">20h</span>
<span class="t" style="top:786.4px;font-size:18px;color:#ccc;right:2028.5px;">15h</span>
<span class="t" style="top:849.9px;font-size:18px;color:#ccc;right:2028.5px;">10h</span>
<span class="t" style="top:911.6px;font-size:18px;color:#ccc;right:2028.5px;">5h</span>
<span class="t" style="top:510.7px;font-size:19px;color:#555;left:726.0px;transform:translateX(-50%) scaleX(0.9806);">35:00h</span>
<span class="t" style="top:700.3px;font-size:19px;color:#555;left:1000.0px;transform:translateX(-50%) scaleX(0.9806);">20:00h</span>
<span class="t" style="top:769.1px;font-size:19px;color:#555;left:1263.4px;transform:translateX(-50%) scaleX(0.9806);">15:00h</span>
<span class="t" style="top:700.3px;font-size:19px;color:#555;left:1525.4px;transform:translateX(-50%) scaleX(0.9806);">20:00h</span>
<span class="t" style="top:818.5px;font-size:19px;color:#555;left:1793.7px;transform:translateX(-50%) scaleX(0.9806);">10:00h</span>
<span class="t" style="top:953.5px;font-size:19px;color:#555;left:2059.7px;transform:translateX(-50%) scaleX(0.9806);">00:00h</span>
<span class="t" style="top:951.2px;font-size:19px;color:#555;left:2326.5px;transform:translateX(-50%) scaleX(0.9806);">00:00h</span>
<span class="t" style="top:574.9px;font-size:43px;color:#fff;left:727.0px;transform:translateX(-50%) scaleX(0.8152);">$</span>
<span class="t" style="top:888.3px;font-size:43px;color:#fff;left:993.5px;transform:translateX(-50%) scaleX(0.8152);">$</span>
<span class="t" style="top:818.5px;font-size:43px;color:#fff;left:1266.8px;transform:translateX(-50%) scaleX(0.8152);">$</span>
<span class="t" style="top:818.8px;font-size:43px;color:#fff;left:1528.7px;transform:translateX(-50%) scaleX(0.8152);">$</span>
<span class="t" style="top:871.9px;font-size:43px;color:#fff;left:1795.0px;transform:translateX(-50%) scaleX(0.8152);">$</span>
<span class="t" style="top:1008.9px;font-size:19px;color:#555;left:713.4px;transform:translateX(-50%) scaleX(0.9674);">lun., dic. 10</span>
<span class="t" style="top:1009.9px;font-size:19px;color:#555;left:986.4px;transform:translateX(-50%) scaleX(0.9893);">mar., dic. 11</span>
<span class="t" style="top:1009.9px;font-size:19px;color:#555;left:1248.0px;transform:translateX(-50%) scaleX(0.9762);">mié., dic. 12</span>
<span class="t" style="top:1009.9px;font-size:19px;color:#555;left:1518.7px;transform:translateX(-50%) scaleX(0.9674);">jue., dic. 13</span>
<span class="t" style="top:1008.9px;font-size:19px;color:#555;left:1790.4px;transform:translateX(-50%) scaleX(0.9676);">vie., dic. 14</span>
<span class="t" style="top:1009.4px;font-size:19px;color:#555;left:2056.2px;transform:translateX(-50%) scaleX(0.9761);">sáb., dic. 15</span>
<span class="t" style="top:1008.9px;font-size:19px;color:#555;left:2324.5px;transform:translateX(-50%) scaleX(0.9836);">dom., dic. 16</span>
<span class="t" style="top:1102.2px;font-size:20px;color:#999;left:484.0px;transform:scaleX(0.9355);transform-origin:0 50%;">Agrupar por:</span>
<span class="t" style="top:1102.2px;font-size:20px;color:#555;left:624.0px;transform:scaleX(0.9358);transform-origin:0 50%;">Usuario</span>
<span class="t" style="top:1102.2px;font-size:20px;color:#555;left:773.0px;transform:scaleX(0.9375);transform-origin:0 50%;">Proyecto</span>
<span class="t" style="top:1152.6px;font-size:18px;color:#999;left:535.0px;transform:scaleX(0.9685);transform-origin:0 50%;">TÍTULO</span>
<span class="t" style="top:1152.6px;font-size:18px;color:#999;left:1435.0px;transform:scaleX(0.9551);transform-origin:0 50%;">DURACIÓN</span>
<span class="t" style="top:1152.6px;font-size:18px;color:#999;left:1675.5px;transform:scaleX(0.9695);transform-origin:0 50%;">IMPORTE</span>
<span class="t" style="top:1215.7px;font-size:19px;color:#333;left:501.3px;transform:translateX(-50%) ;">3</span>
<span class="t" style="top:1212.6px;font-size:23px;color:#222;left:535.0px;transform:scaleX(0.9239);transform-origin:0 50%;">Oven Bett</span>
<span class="t" style="top:1213.0px;font-size:22px;color:#555;right:982.0px;transform:scaleX(0.9898);transform-origin:100% 50%;">40:00</span>
<span class="t" style="top:1213.0px;font-size:22px;color:#555;right:749.3px;transform:scaleX(0.9506);transform-origin:100% 50%;">2600 USD</span>
<span class="t" style="top:1292.2px;font-size:19px;color:#333;left:501.3px;transform:translateX(-50%) ;">2</span>
<span class="t" style="top:1288.8px;font-size:23px;color:#222;left:535.0px;transform:scaleX(0.9628);transform-origin:0 50%;">Sarah Mitts</span>
<span class="t" style="top:1289.0px;font-size:22px;color:#555;right:982.0px;transform:scaleX(0.9898);transform-origin:100% 50%;">20:00</span>
<span class="t" style="top:1289.0px;font-size:22px;color:#555;right:749.3px;transform:scaleX(0.9296);transform-origin:100% 50%;">600 USD</span>
<span class="t" style="top:1373.7px;font-size:19px;color:#333;left:502.0px;transform:translateX(-50%) ;">5</span>
<span class="t" style="top:1369.8px;font-size:23px;color:#555;left:562.0px;transform:scaleX(0.9422);transform-origin:0 50%;">Proyecto X</span>
<span class="t" style="top:1370.9px;font-size:22px;color:#555;right:982.0px;transform:scaleX(0.9898);transform-origin:100% 50%;">15:00</span>
<span class="t" style="top:1370.9px;font-size:22px;color:#555;right:749.3px;transform:scaleX(0.9296);transform-origin:100% 50%;">600 USD</span>
<span class="t" style="top:1451.2px;font-size:19px;color:#333;left:502.0px;transform:translateX(-50%) ;">2</span>
<span class="t" style="top:1448.8px;font-size:23px;color:#555;left:561.0px;transform:scaleX(0.9498);transform-origin:0 50%;">Oficina</span>
<span class="t" style="top:1450.3px;font-size:22px;color:#555;right:982.0px;transform:scaleX(0.9807);transform-origin:100% 50%;">5:00</span>
<span class="t" style="top:1450.3px;font-size:22px;color:#555;right:749.3px;transform:scaleX(0.9105);transform-origin:100% 50%;">0 USD</span>
<span class="t" style="top:1509.4px;font-size:19px;color:#555;left:482.5px;transform:scaleX(0.9942);transform-origin:0 50%;">Presentación de declaración de impuestos</span>
<span class="t" style="top:1509.3px;font-size:22px;color:#555;right:982.0px;transform:scaleX(0.9807);transform-origin:100% 50%;">3:00</span>
<span class="t" style="top:1509.3px;font-size:22px;color:#555;right:749.3px;transform:scaleX(0.9105);transform-origin:100% 50%;">0 USD</span>
<span class="t" style="top:1557.1px;font-size:19px;color:#555;left:482.5px;transform:scaleX(0.9929);transform-origin:0 50%;">Facturación de clientes</span>
<span class="t" style="top:1554.7px;font-size:22px;color:#555;right:982.0px;transform:scaleX(0.9807);transform-origin:100% 50%;">2:00</span>
<span class="t" style="top:1554.7px;font-size:22px;color:#555;right:749.3px;transform:scaleX(0.9105);transform-origin:100% 50%;">0 USD</span>
<span class="t" style="top:1328.6px;font-size:51px;color:#333;left:2095.0px;transform:scaleX(0.9912);transform-origin:0 50%;">27:00</span>
<span class="t" style="top:1394.2px;font-size:23px;color:#333;left:2113.5px;transform:scaleX(0.9706);transform-origin:0 50%;">2000 USD</span>
<span class="t" style="top:57.6px;font-size:24px;color:#90a4ae;left:2331.0px;transform:translateX(-50%) ;">?</span>
</div>
<div class="tl" style="z-index:6">
<span class="t menu" style="top:477.6px;font-size:26px;color:#222;left:514.0px;transform:scaleX(0.9950);transform-origin:0 50%;">Facturabilidad</span>
<span class="t menu" style="top:543.7px;font-size:26px;color:#777;left:514.0px;transform:scaleX(0.9843);transform-origin:0 50%;">Proyecto</span>
</div>
</body>
</html>
